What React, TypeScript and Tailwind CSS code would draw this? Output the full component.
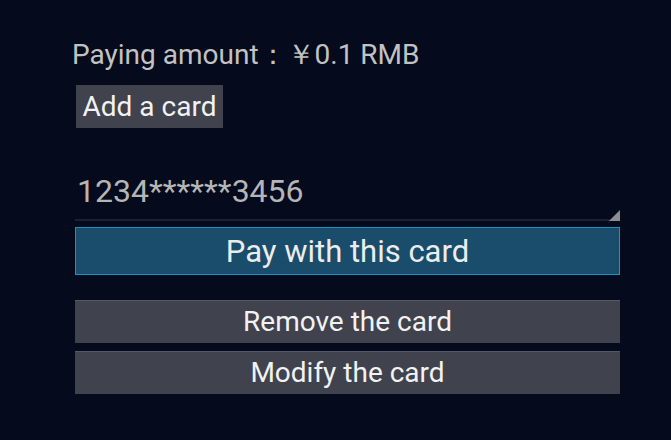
import React from 'react';

const App = () => {
  return (
    <div className="w-[671px] h-[440px] bg-[#050a1c] font-['Roboto',sans-serif] overflow-hidden">
      <div className="pt-[38px] pl-[72px] pr-[51px]">
        <p className="text-[28px] leading-[34px] text-[#c2c2c2]">Paying amount：￥0.1 RMB</p>

        <div className="mt-[13px] pl-[4px]">
          <button className="h-[43px] w-[147px] bg-[#40424e] text-[28px] text-[#f2f2f2] leading-none">
            Add a card
          </button>
        </div>

        <div className="mt-[44px] ml-[3px] relative">
          <div className="pt-[3px] pb-[12px] pl-[2px] text-[32px] leading-[32px] text-[#b5b5b5]">1234******3456</div>
          <div className="h-[2px] bg-[#1c2030]" />
          <svg className="absolute right-0 bottom-0" width="11" height="11" viewBox="0 0 11 11">
            <polygon points="11,0 11,11 0,11" fill="#8e8e8e" />
          </svg>
        </div>

        <div className="mt-[6px] ml-[3px] flex flex-col">
          <button className="h-[48px] bg-[#1a4c6b] border border-[#1a93c0] text-[31px] text-[#ececec] leading-none">
            Pay with this card
          </button>
          <button className="mt-[25px] h-[43px] bg-[#40424e] border-t border-[#555866] text-[28px] text-[#f2f2f2] leading-none">
            Remove the card
          </button>
          <button className="mt-[8px] h-[43px] bg-[#40424e] border-t border-[#555866] text-[28px] text-[#f2f2f2] leading-none">
            Modify the card
          </button>
        </div>
      </div>
    </div>
  );
};

export default App;
